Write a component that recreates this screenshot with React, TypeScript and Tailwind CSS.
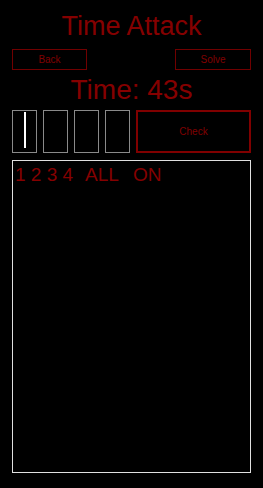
export default function App() {
  const codeBoxes = [0, 1, 2, 3];

  return (
    <div className="flex h-[488px] w-[263px] flex-col bg-black px-[12px] font-['Liberation_Sans',Arial,sans-serif] text-[#850000]">
      <h1 className="mt-[13px] h-[27px] text-center text-[27px] leading-[27px]">Time Attack</h1>

      <div className="mt-[9px] flex h-[21px] justify-between">
        <button className="w-[75px] border border-[#700000] text-[10px] text-[#800000]">Back</button>
        <button className="w-[76px] border border-[#700000] text-[10px] text-[#800000]">Solve</button>
      </div>

      <p className="mt-[6px] h-[28px] text-center text-[28px] leading-[28px]">Time: 43s</p>

      <div className="mt-[6px] flex h-[43px] gap-[6px]">
        {codeBoxes.map((i) => (
          <div key={i} className="flex w-[25px] justify-center border border-[#8a8a8a]">
            {i === 0 && <span className="mt-[1px] h-[36px] w-[2px] bg-white" />}
          </div>
        ))}
        <button className="flex-1 border-2 border-[#800000] text-[10px] text-[#800000]">Check</button>
      </div>

      <div className="mt-[7px] h-[313px] border border-[#e0e0e0] pl-[2px] pt-[4px]">
        <div className="flex whitespace-pre text-[19px] leading-[19px]">
          <span>1 2 3 4</span>
          <span className="ml-[12px]">ALL</span>
          <span className="ml-[14px]">ON</span>
        </div>
      </div>
    </div>
  );
}
